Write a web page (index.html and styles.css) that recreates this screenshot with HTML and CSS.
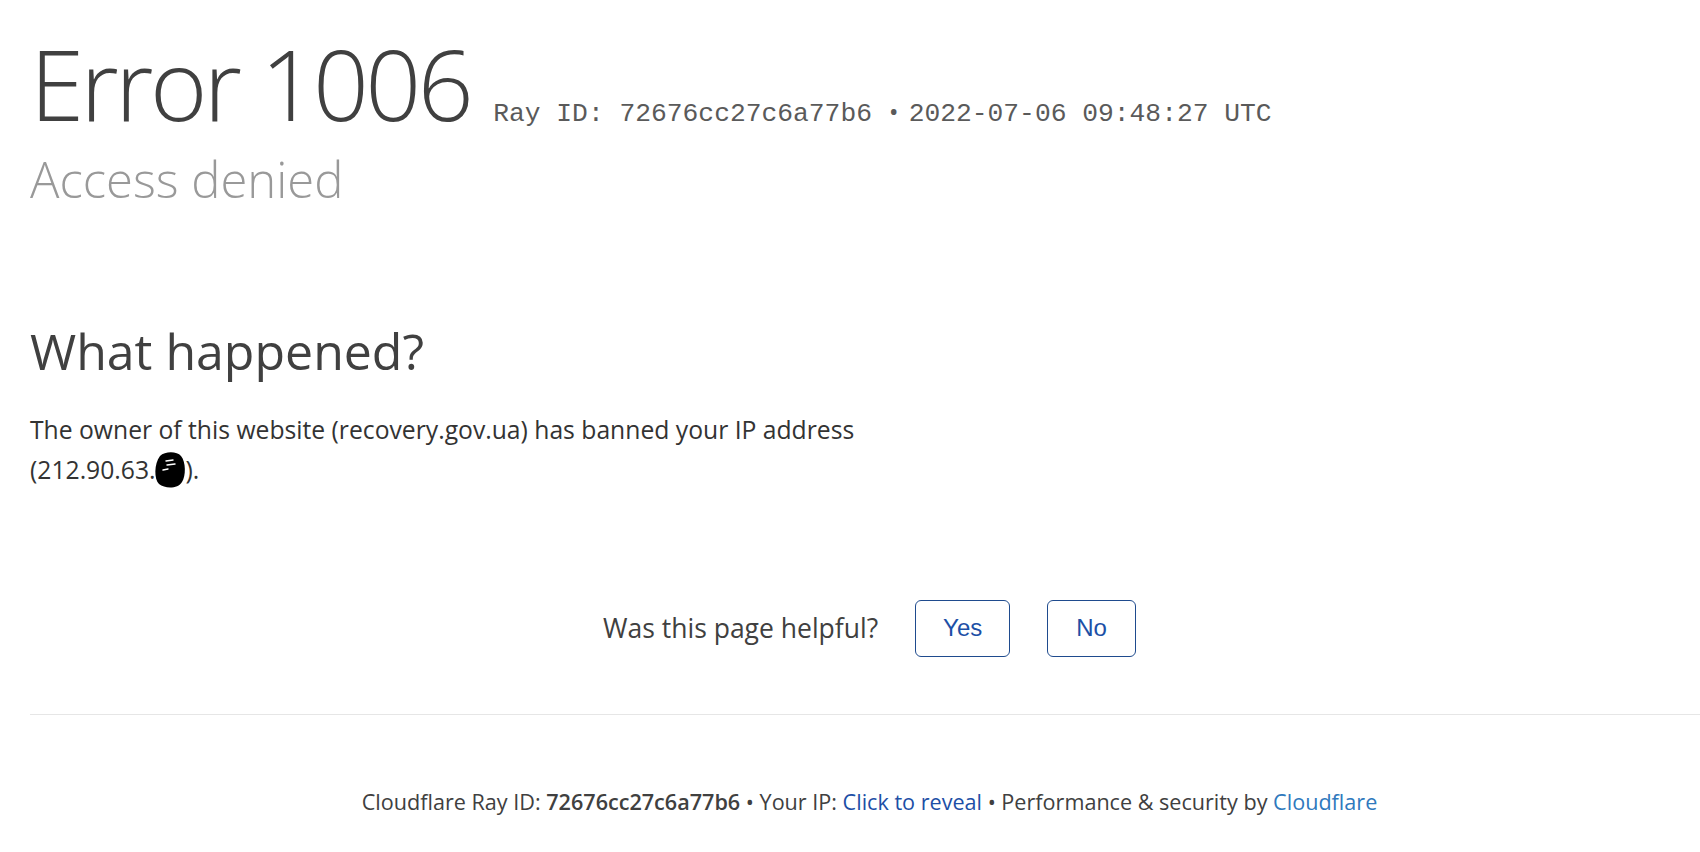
FILE: index.html
```html
<!DOCTYPE html>
<html lang="en">
<head>
<meta charset="utf-8">
<title>Access denied | recovery.gov.ua used Cloudflare to restrict access</title>
<link rel="stylesheet" href="styles.css">
</head>
<body>
<div class="wrapper">
  <header class="head">
    <div class="title-row">
      <h1 class="code">Error 1006</h1>
      <span class="ray">Ray ID: 72676cc27c6a77b6 <span class="sep">&bull;</span>2022-07-06 09:48:27 UTC</span>
    </div>
    <h2 class="sub">Access denied</h2>
  </header>

  <section class="what">
    <h2 class="what-title">What happened?</h2>
    <p class="what-text">The owner of this website (recovery.gov.ua) has banned your IP address (212.90.63.<svg class="blot" width="32" height="38" viewBox="0 0 32 38" aria-hidden="true"><path d="M6 5 C11 0 23 0 27 5 C32 11 32 25 28 31 C24 38 11 38 5 33 C0 28 0 13 6 5 Z" fill="#000"/><path d="M12 10 L19 9 M13 14 L21 13 M9 19 L14 18" stroke="#fff" stroke-width="1.4" stroke-linecap="round" fill="none"/></svg>).</p>
  </section>

  <div class="feedback">
    <span class="feedback-q">Was this page helpful?</span>
    <button class="fb-btn fb-yes" type="button">Yes</button>
    <button class="fb-btn fb-no" type="button">No</button>
  </div>

  <footer class="footer">
    <p class="footer-text">Cloudflare Ray ID: <strong class="footer-ray">72676cc27c6a77b6</strong> &bull; Your IP: <a class="reveal" href="#">Click to reveal</a> &bull; Performance &amp; security by <a class="cf-link" href="#">Cloudflare</a></p>
  </footer>
</div>
</body>
</html>
```

FILE: styles.css
```css
html, body {
  margin: 0;
  padding: 0;
  background: #fff;
}

body {
  overflow: hidden;
  font-family: "Open Sans", "Noto Sans", "Liberation Sans", sans-serif;
  color: #404040;
}

.wrapper {
  width: 1679px;
  margin-left: 30px;
  padding-top: 33px;
}

.title-row {
  display: flex;
  align-items: baseline;
}

.code {
  margin: 0;
  font-size: 98px;
  line-height: 100px;
  font-weight: 300;
  color: #404040;
  letter-spacing: -3.5px;
}

.ray {
  margin-left: 23px;
  font-family: "Liberation Mono", "Courier New", monospace;
  font-size: 26.3px;
  color: #5a5a5a;
  white-space: nowrap;
}

.sep {
  font-family: "Open Sans", sans-serif;
  margin-left: 1px;
  margin-right: 10px;
}

.sub {
  margin: 16px 0 0;
  font-size: 49px;
  line-height: 60px;
  font-weight: 300;
  color: #999;
}

.what-title {
  margin: 112px 0 0;
  font-size: 50px;
  line-height: 60px;
  font-weight: 400;
  color: #404040;
}

.what-text {
  margin: 29px 0 0;
  max-width: 880px;
  font-size: 24.7px;
  line-height: 40px;
  color: #333;
}

.blot {
  vertical-align: -10px;
  margin-left: -2px;
}

.feedback {
  margin-top: 109.5px;
  height: 57px;
  display: flex;
  align-items: center;
  justify-content: center;
  gap: 37px;
}

.feedback-q {
  font-size: 26.5px;
  color: #404040;
}

.fb-btn {
  height: 57px;
  box-sizing: border-box;
  padding: 0 27px;
  background: #fff;
  border: 1px solid #1f4b8e;
  border-radius: 6px;
  font-family: "Liberation Sans", Arial, sans-serif;
  font-size: 24px;
  color: #1d50a6;
}

.fb-no {
  padding: 0 28px;
}

.footer {
  margin-top: 57px;
  border-top: 1px solid #e6e6e6;
  padding-top: 72px;
}

.footer-text {
  margin: 0;
  text-align: center;
  font-size: 21.6px;
  line-height: 30px;
  color: #404040;
}

.footer-ray {
  font-weight: 600;
}

.reveal {
  color: #1d4fa6;
  text-decoration: none;
}

.cf-link {
  color: #2f79bd;
  text-decoration: none;
}
```
